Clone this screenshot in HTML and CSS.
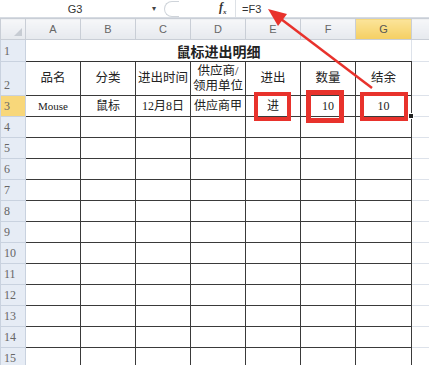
FILE: index.html
```html
<!DOCTYPE html>
<html lang="zh">
<head>
  <meta charset="UTF-8" />
  <title>鼠标进出明细</title>
  <link rel="stylesheet" href="styles.css">
</head>
<body>

  <div class="formula-bar">
    <div class="name-box">G3</div>
    <div class="drop">&#9662;</div>
    <div class="round-btn"></div>
    <div class="fx">f<sub>x</sub></div>
    <div class="formula">=F3</div>
  </div>

  <table class="sheet">
    <colgroup>
      <col class="c-num"><col class="c-a"><col class="c-a"><col class="c-a"><col class="c-a"><col class="c-a"><col class="c-a"><col class="c-g"><col>
    </colgroup>
    <tr class="col-head">
      <th class="corner"><span class="tri"></span></th>
      <th>A</th><th>B</th><th>C</th><th>D</th><th>E</th><th>F</th><th class="sel">G</th><th class="rest"></th>
    </tr>
    <tr class="r1">
      <th class="rn">1</th>
      <td colspan="7" class="title">鼠标进出明细</td>
      <td class="out"></td>
    </tr>
    <tr class="r2">
      <th class="rn bottom">2</th>
      <td class="d">品名</td><td class="d">分类</td><td class="d">进出时间</td>
      <td class="d">供应商/<br>领用单位</td><td class="d">进出</td><td class="d">数量</td><td class="d">结余</td>
      <td class="out"></td>
    </tr>
    <tr class="r3">
      <th class="rn sel">3</th>
      <td class="d small">Mouse</td><td class="d">鼠标</td><td class="d">12月8日</td><td class="d">供应商甲</td>
      <td class="d mark"><span class="box box-e"></span>进</td>
      <td class="d mark"><span class="box box-f"></span>10</td>
      <td class="d mark active"><span class="box box-g"></span>10<span class="handle"></span></td>
      <td class="out"></td>
    </tr>
    <tr><th class="rn">4</th><td class="d"></td><td class="d"></td><td class="d"></td><td class="d"></td><td class="d"></td><td class="d"></td><td class="d"></td><td class="out"></td></tr>
    <tr><th class="rn">5</th><td class="d"></td><td class="d"></td><td class="d"></td><td class="d"></td><td class="d"></td><td class="d"></td><td class="d"></td><td class="out"></td></tr>
    <tr><th class="rn">6</th><td class="d"></td><td class="d"></td><td class="d"></td><td class="d"></td><td class="d"></td><td class="d"></td><td class="d"></td><td class="out"></td></tr>
    <tr><th class="rn">7</th><td class="d"></td><td class="d"></td><td class="d"></td><td class="d"></td><td class="d"></td><td class="d"></td><td class="d"></td><td class="out"></td></tr>
    <tr><th class="rn">8</th><td class="d"></td><td class="d"></td><td class="d"></td><td class="d"></td><td class="d"></td><td class="d"></td><td class="d"></td><td class="out"></td></tr>
    <tr><th class="rn">9</th><td class="d"></td><td class="d"></td><td class="d"></td><td class="d"></td><td class="d"></td><td class="d"></td><td class="d"></td><td class="out"></td></tr>
    <tr><th class="rn">10</th><td class="d"></td><td class="d"></td><td class="d"></td><td class="d"></td><td class="d"></td><td class="d"></td><td class="d"></td><td class="out"></td></tr>
    <tr><th class="rn">11</th><td class="d"></td><td class="d"></td><td class="d"></td><td class="d"></td><td class="d"></td><td class="d"></td><td class="d"></td><td class="out"></td></tr>
    <tr><th class="rn">12</th><td class="d"></td><td class="d"></td><td class="d"></td><td class="d"></td><td class="d"></td><td class="d"></td><td class="d"></td><td class="out"></td></tr>
    <tr><th class="rn">13</th><td class="d"></td><td class="d"></td><td class="d"></td><td class="d"></td><td class="d"></td><td class="d"></td><td class="d"></td><td class="out"></td></tr>
    <tr><th class="rn">14</th><td class="d"></td><td class="d"></td><td class="d"></td><td class="d"></td><td class="d"></td><td class="d"></td><td class="d"></td><td class="out"></td></tr>
    <tr><th class="rn">15</th><td class="d"></td><td class="d"></td><td class="d"></td><td class="d"></td><td class="d"></td><td class="d"></td><td class="d"></td><td class="out"></td></tr>
  </table>

  <!-- red arrow from G3 up to the formula -->
  <svg class="arrow" width="429" height="365" viewBox="0 0 429 365">
    <line x1="372" y1="88" x2="281" y2="19" stroke="#e8322c" stroke-width="2.5"/>
    <polygon points="268,9 287,14 278,26" fill="#e8322c"/>
  </svg>

</body>
</html>
```

FILE: styles.css
```css
body {
  margin: 0;
  width: 429px;
  height: 365px;
  overflow: hidden;
  background: #fff;
  position: relative;
  font-family: 'Liberation Serif', 'Noto Sans CJK SC', serif;
  color: #222;
}
.formula-bar {
  display: flex;
  align-items: center;
  height: 17px;
  border-bottom: 1px solid #d6dbe2;
  font-family: 'Liberation Sans', sans-serif;
  font-size: 11px;
  color: #333;
}
.name-box {
  width: 150px;
  text-align: center;
  padding-right: 2px;
}
.drop {
  font-size: 8px;
  color: #444;
  width: 10px;
}
.round-btn {
  width: 14px;
  height: 14px;
  border: 1px solid #cfd4da;
  border-right: none;
  border-radius: 8px 0 0 8px;
  margin-left: 2px;
}
.fx {
  margin-left: 40px;
  font-family: 'Liberation Serif', serif;
  font-style: italic;
  font-weight: bold;
  font-size: 12px;
  width: 12px;
  border-right: 1px solid #dde1e6;
  padding-right: 4px;
}
.fx sub {
  font-size: 7px;
}
.formula {
  margin-left: 6px;
  font-size: 11px;
}
.sheet {
  border-collapse: collapse;
  table-layout: fixed;
  width: 440px;
}
.c-num { width: 25px; }
.c-a { width: 55px; }
.c-g { width: 56px; }
.col-head th {
  height: 17px;
  padding: 0;
  font-family: 'Liberation Sans', sans-serif;
  font-weight: normal;
  font-size: 11px;
  color: #666;
  background: linear-gradient(#f6f7f9, #e6e9ee);
  border: 1px solid #c9ced6;
}
.col-head th.sel {
  background: linear-gradient(#fbe49a, #f5cf62);
  color: #555;
}
.col-head th.rest {
  border-right: none;
}
.corner {
  position: relative;
}
.tri {
  position: absolute;
  right: 3px;
  bottom: 3px;
  border-left: 8px solid transparent;
  border-bottom: 8px solid #c7ccd3;
}
.rn {
  padding: 0 0 0 3px;
  text-align: left;
  vertical-align: bottom;
  font-family: 'Liberation Serif', serif;
  font-weight: normal;
  font-size: 12px;
  color: #666;
  background: #e6ecf5;
  border: 1px solid #c9d2df;
  line-height: 19px;
}
.rn.sel {
  background: #f8d77a;
}
tr { height: 21px; }
.r1 { height: 22px; }
.r2 { height: 34px; }
.title {
  text-align: center;
  font-family: 'Noto Sans CJK SC', sans-serif;
  font-weight: bold;
  font-size: 14px;
  padding: 0;
  border-bottom: 1px solid #333;
}
.d {
  border: 1px solid #3a3a3a;
  text-align: center;
  padding: 0;
  font-size: 12px;
  line-height: 15px;
}
.r2 .d {
  font-size: 12.5px;
}
.small {
  font-size: 11px;
}
.out {
  border: 1px solid #dde2ea;
  border-right: none;
}
.r1 .out {
  border-top: none;
}
.mark {
  position: relative;
}
.box {
  position: absolute;
  border: 4px solid #e8322c;
  box-sizing: border-box;
}
.box-e {
  left: 8px;
  top: -4px;
  width: 37px;
  height: 29px;
}
.box-f {
  left: 5px;
  top: -6px;
  width: 38px;
  height: 33px;
  border-width: 5px;
}
.box-g {
  left: 4px;
  top: -4px;
  width: 48px;
  height: 29px;
}
.handle {
  position: absolute;
  right: -3px;
  bottom: -3px;
  width: 4px;
  height: 4px;
  background: #222;
  border: 1px solid #fff;
}
.arrow {
  position: absolute;
  left: 0;
  top: 0;
  pointer-events: none;
}
```
